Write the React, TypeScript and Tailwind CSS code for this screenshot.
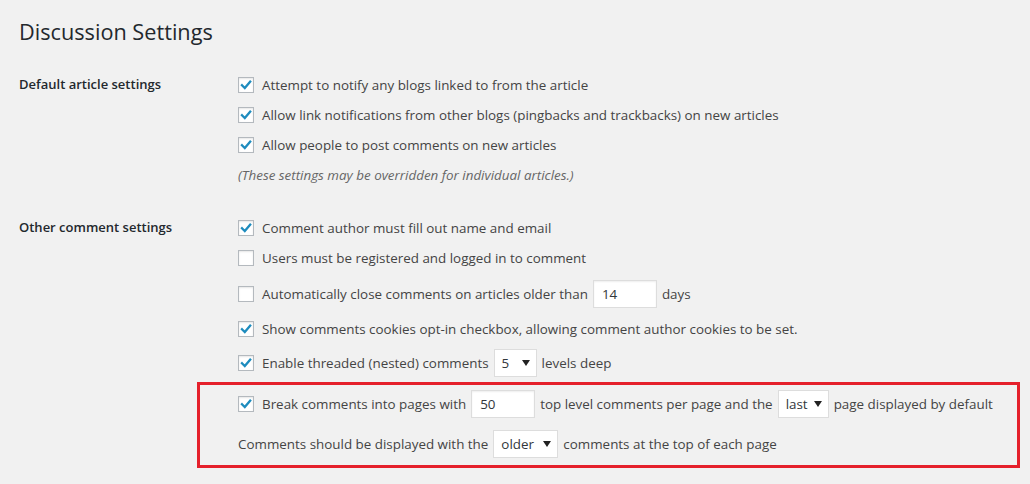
import React from "react";

const font = { fontFamily: '"Open Sans", "Noto Sans", sans-serif' };

function Check({ checked }: { checked?: boolean }) {
  return (
    <span className="inline-flex w-4 h-4 shrink-0 items-center justify-center border border-[#b4b9be] bg-white shadow-[inset_0_1px_2px_rgba(0,0,0,0.1)] mr-[8px]">
      {checked && (
        <svg width="14" height="14" viewBox="0 0 14 14">
          <path d="M3 7.2 L5.8 10 L11.2 3.6" fill="none" stroke="#1e8cbe" strokeWidth="2.3" strokeLinecap="square" />
        </svg>
      )}
    </span>
  );
}

function TextBox({ value, w }: { value: string; w: string }) {
  return (
    <span className={`inline-flex items-center h-[28px] ${w} bg-white border border-[#ddd] shadow-[inset_0_1px_2px_rgba(0,0,0,0.07)] px-[8px] text-[#32373c] mx-[5px]`}>
      {value}
    </span>
  );
}

function Select({ value, w }: { value: string; w: string }) {
  return (
    <span className={`inline-flex items-center justify-between h-[28px] ${w} bg-white border border-[#ddd] pl-[7px] pr-[6px] text-[#32373c] mx-[5px]`}>
      <span>{value}</span>
      <svg width="8" height="6" viewBox="0 0 8 6">
        <path d="M0 0 H8 L4 6 Z" fill="#222" />
      </svg>
    </span>
  );
}

export default function App() {
  return (
    <div className="w-[1030px] h-[484px] bg-[#f1f1f1] overflow-hidden text-[13.4px] text-[#444]" style={font}>
      <h1 className="pl-[19px] pt-[16px] h-[70px] text-[21.7px] leading-[31px] text-[#23282d]">Discussion Settings</h1>

      <div className="flex">
        <div className="w-[238px] pl-[19px] h-[30px] flex items-center font-semibold text-[13px] text-[#23282d]">Default article settings</div>
        <div className="flex flex-col">
          <div className="h-[30px] flex items-center"><Check checked />Attempt to notify any blogs linked to from the article</div>
          <div className="h-[30px] flex items-center"><Check checked />Allow link notifications from other blogs (pingbacks and trackbacks) on new articles</div>
          <div className="h-[30px] flex items-center"><Check checked />Allow people to post comments on new articles</div>
          <div className="h-[30px] flex items-center italic text-[#666]">(These settings may be overridden for individual articles.)</div>
        </div>
      </div>

      <div className="flex mt-[23px]">
        <div className="w-[238px] pl-[19px] h-[30px] flex items-center font-semibold text-[13px] text-[#23282d]">Other comment settings</div>
        <div className="flex flex-col">
          <div className="h-[30px] flex items-center"><Check checked />Comment author must fill out name and email</div>
          <div className="h-[30px] flex items-center"><Check />Users must be registered and logged in to comment</div>
          <div className="h-[38px] mt-[2px] flex items-center"><Check />Automatically close comments on articles older than<TextBox value="14" w="w-[64px]" />days</div>
          <div className="h-[32px] flex items-center"><Check checked />Show comments cookies opt-in checkbox, allowing comment author cookies to be set.</div>
          <div className="h-[36px] flex items-center"><Check checked />Enable threaded (nested) comments<Select value="5" w="w-[43px]" />levels deep</div>
        </div>
      </div>

      <div className="ml-[197px] mt-[1px] w-[823px] border-[3px] border-[#e5202b] pl-[38px]">
        <div className="h-[38px] flex items-center"><Check checked />Break comments into pages with<TextBox value="50" w="w-[64px]" />top level comments per page and the<Select value="last" w="w-[51px]" />page displayed by default</div>
        <div className="h-[42px] flex items-center">Comments should be displayed with the<Select value="older" w="w-[65px]" />comments at the top of each page</div>
      </div>
    </div>
  );
}
